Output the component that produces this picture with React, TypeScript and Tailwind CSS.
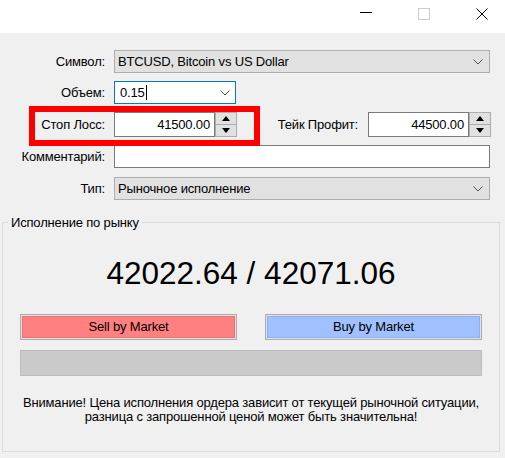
import React from 'react';

const font = { fontFamily: '"Liberation Sans", Arial, sans-serif' };

function Chevron() {
  return (
    <svg width="10" height="6" viewBox="0 0 10 6" className="shrink-0">
      <path d="M0.5 0.5 L5 5 L9.5 0.5" fill="none" stroke="#505050" strokeWidth="1" />
    </svg>
  );
}

function Spinner() {
  return (
    <div className="flex h-[25px] w-[22px] shrink-0 flex-col border border-[#adadad] bg-[#e1e1e1]">
      <div className="flex flex-1 items-center justify-center border-b border-[#adadad]">
        <svg width="8" height="5" viewBox="0 0 8 5">
          <path d="M0 5 L4 0 L8 5 Z" fill="#000" />
        </svg>
      </div>
      <div className="flex flex-1 items-center justify-center">
        <svg width="8" height="5" viewBox="0 0 8 5">
          <path d="M0 0 L8 0 L4 5 Z" fill="#000" />
        </svg>
      </div>
    </div>
  );
}

export default function App() {
  return (
    <div
      className="h-[458px] w-[505px] overflow-hidden bg-[#f0f0f0] text-[13px] tracking-[-0.17px] text-black"
      style={font}
    >
      {/* Title bar */}
      <div className="flex h-[33px] items-center justify-end gap-[46px] bg-white pr-[17px]">
        <div className="mt-[-8px] h-px w-[12px] bg-black" />
        <div className="mt-[-5px] h-[12px] w-[12px] border border-[#cccccc]" />
        <svg width="12" height="12" viewBox="0 0 12 12" className="mt-[-5px]">
          <path d="M0.5 0.5 L11.5 11.5 M11.5 0.5 L0.5 11.5" stroke="#000" strokeWidth="1" />
        </svg>
      </div>

      {/* Form */}
      <div className="pt-[17px]">
        <div className="flex h-[23px] items-center gap-[9px]">
          <div className="w-[105px] text-right">Символ:</div>
          <div className="flex h-[23px] w-[376px] items-center justify-between border border-[#adadad] bg-[#e1e1e1] pl-[3px] pr-[6px]">
            <span>BTCUSD, Bitcoin vs US Dollar</span>
            <Chevron />
          </div>
        </div>

        <div className="mt-[8px] flex h-[23px] items-center gap-[9px]">
          <div className="w-[105px] text-right">Объем:</div>
          <div className="flex h-[23px] w-[122px] items-center justify-between border border-[#0078d7] bg-white pl-[5px] pr-[5px]">
            <span className="flex items-center">
              0.15
              <span className="ml-px inline-block h-[15px] w-px bg-black" />
            </span>
            <Chevron />
          </div>
        </div>

        <div className="relative mt-[8px] flex h-[25px] items-center">
          <div className="w-[105px] text-right">Стоп Лосс:</div>
          <div className="ml-[9px] flex h-[25px] w-[101px] items-center justify-end border border-[#7a7a7a] bg-white pr-[4px]">
            41500.00
          </div>
          <Spinner />
          <div className="w-[121px] text-right">Тейк Профит:</div>
          <div className="ml-[10px] flex h-[25px] w-[101px] items-center justify-end border border-[#7a7a7a] bg-white pr-[4px]">
            44500.00
          </div>
          <Spinner />
          <div className="absolute left-[29px] top-[-6px] h-[40px] w-[231px] border-[6px] border-[#ff0000]" />
        </div>

        <div className="mt-[8px] flex h-[23px] items-center gap-[9px]">
          <div className="w-[105px] text-right">Комментарий:</div>
          <div className="h-[23px] w-[376px] border border-[#7a7a7a] bg-white" />
        </div>

        <div className="mt-[9px] flex h-[23px] items-center gap-[9px]">
          <div className="w-[105px] text-right">Тип:</div>
          <div className="flex h-[23px] w-[376px] items-center justify-between border border-[#adadad] bg-[#e1e1e1] pl-[3px] pr-[6px]">
            <span>Рыночное исполнение</span>
            <Chevron />
          </div>
        </div>
      </div>

      {/* Group box */}
      <div className="relative ml-[2px] mt-[22px] h-[230px] w-[498px] border border-[#dcdcdc]">
        <div className="absolute left-[5px] top-[-8px] bg-[#f0f0f0] px-[3px] leading-[15px]">
          Исполнение по рынку
        </div>

        <div className="mt-[32px] h-[36px] text-center text-[31.5px] leading-[36px] tracking-normal">
          42022.64 / 42071.06
        </div>

        <div className="mt-[23px] flex justify-between px-[17px]">
          <div className="h-[26px] w-[217px] border border-[#adadad] bg-[#e1e1e1] p-px">
            <div className="flex h-full items-center justify-center border border-[#ee7070] bg-[#ff8080]">
              Sell by Market
            </div>
          </div>
          <div className="h-[26px] w-[217px] border border-[#adadad] bg-[#e1e1e1] p-px">
            <div className="flex h-full items-center justify-center border border-[#8fb0f0] bg-[#a0c0ff]">
              Buy by Market
            </div>
          </div>
        </div>

        <div className="mx-[17px] mt-[10px] h-[26px] border border-[#bcbcbc] bg-[#cacaca]" />

        <div className="mt-[20px] text-center leading-[14px]">
          Внимание! Цена исполнения ордера зависит от текущей рыночной ситуации,
          <br />
          разница с запрошенной ценой может быть значительна!
        </div>
      </div>
    </div>
  );
}
